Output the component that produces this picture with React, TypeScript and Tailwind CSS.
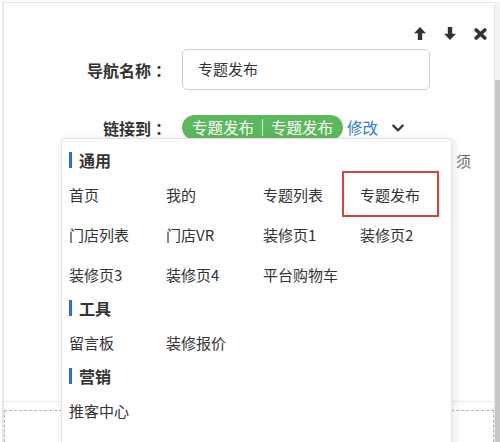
import React from 'react';
import { FaChevronDown } from 'react-icons/fa';

interface LinkGroup {
    title: string;
    items: string[];
}

const GROUPS: LinkGroup[] = [
    { title: '通用', items: ['首页', '我的', '专题列表', '专题发布', '门店列表', '门店VR', '装修页1', '装修页2', '装修页3', '装修页4', '平台购物车'] },
    { title: '工具', items: ['留言板', '装修报价'] },
    { title: '营销', items: ['推客中心'] },
];

const font = { fontFamily: '"Noto Sans CJK SC", "Noto Sans", sans-serif' };
const colonFont = { fontFamily: '"Noto Sans CJK JP", "Noto Sans CJK SC", sans-serif' };

const ArrowUp = () => (
    <svg width="12" height="13" viewBox="0 0 12 13" fill="currentColor">
        <path d="M6 0 L12 6.2 H8.2 V13 H3.8 V6.2 H0 Z" />
    </svg>
);

const ArrowDown = () => (
    <svg width="12" height="13" viewBox="0 0 12 13" fill="currentColor">
        <path d="M6 13 L12 6.8 H8.2 V0 H3.8 V6.8 H0 Z" />
    </svg>
);

const Close = () => (
    <svg width="13" height="12" viewBox="0 0 13 12" fill="none" stroke="currentColor" strokeWidth="3.6" strokeLinecap="round">
        <path d="M2.2 2 L10.8 10 M10.8 2 L2.2 10" />
    </svg>
);

const LinkMenu: React.FC = () => (
    <div className="absolute left-[57px] top-[135px] w-[391px] h-[320px] bg-white border border-[#e3e3e3] rounded-t-[4px] shadow-[2px_2px_8px_rgba(0,0,0,0.12)] pt-[11px] pl-[7px]">
        {GROUPS.map((group, gi) => (
            <div key={group.title} className={gi === 0 ? '' : 'mt-[4px]'}>
                <div className="flex items-center h-[20px]">
                    <span className="w-[3px] h-[16px] bg-[#2a6fd0]" />
                    <span className="ml-[7px] text-[16px] font-bold text-[#333] leading-none">{group.title}</span>
                </div>
                <div className="mt-[4px] grid grid-cols-[repeat(4,97px)]">
                    {group.items.map((item) => (
                        <div key={item} className="h-[40px] flex items-center text-[15px] text-[#333] leading-none">
                            {item}
                        </div>
                    ))}
                </div>
            </div>
        ))}

        {/* highlighted choice */}
        <div className="absolute left-[280px] top-[32px] w-[97px] h-[46px] border-2 border-[#d9413e]" />
    </div>
);

export default function App() {
    return (
        <div className="w-[500px] h-[442px] overflow-hidden bg-white flex pt-[2px] pl-[2px]" style={font}>
            <div className="relative flex-1 flex flex-col border-t border-l-2 border-r border-[#e6e6e6]">
                <div className="h-[399px] flex flex-col border-b border-[#ececec]">
                    {/* move / delete */}
                    <div className="flex justify-end items-center gap-[18px] pr-[7px] pt-[24px] h-[37px] text-[#333]">
                        <ArrowUp />
                        <ArrowDown />
                        <Close />
                    </div>

                    <div className="flex items-center mt-[9px]">
                        <div className="w-[163px] text-right text-[16px] font-bold text-[#333]">
                            导航名称<span style={colonFont}>：</span>
                        </div>
                        <div className="ml-[15px] w-[248px] h-[41px] border border-[#cfcfcf] rounded-[5px] flex items-center pl-[15px] text-[15px] text-[#333]">
                            专题发布
                        </div>
                    </div>

                    <div className="flex items-center mt-[25px] h-[25px]">
                        <div className="w-[163px] text-right text-[16px] font-bold text-[#333]">
                            链接到<span style={colonFont}>：</span>
                        </div>
                        <div className="ml-[15px] h-[25px] rounded-full bg-[#5cb85c] flex items-center pl-[10px] pr-[10px] text-[15.5px] text-white leading-none">
                            专题发布
                            <span className="w-px h-[17px] bg-white/80 mx-[8px]" />
                            专题发布
                        </div>
                        <span className="ml-[4px] text-[15.5px] text-[#2f80c4] leading-none">修改</span>
                        <FaChevronDown size={14} className="ml-[13px] text-[#333]" />
                    </div>

                    <div className="flex justify-end pr-[23px] mt-[10px] text-[15px] text-[#666]">
                        <span>此项为必</span>
                        <span className="ml-[4px]">须</span>
                    </div>
                </div>

                <div className="mt-[8px] flex-1 border border-dashed border-b-0 border-[#b5b5b5]" />

                <LinkMenu />
            </div>

            <div className="w-[5px] flex flex-col">
                <div className="h-[78px] bg-[#f3f3f3]" />
                <div className="flex-1 bg-[#c7c7c7]" />
            </div>
        </div>
    );
}
